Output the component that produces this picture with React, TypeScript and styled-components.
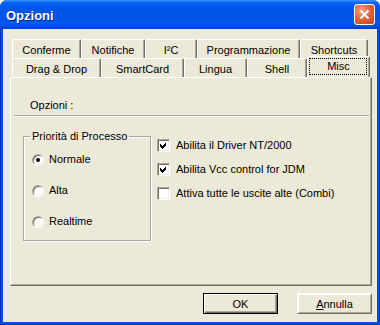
import React from 'react';
import styled, { createGlobalStyle } from 'styled-components';

const GlobalStyle = createGlobalStyle`
  html, body {
    margin: 0;
    padding: 0;
    background: #fff;
  }
  body {
    font-family: "Liberation Sans", Arial, sans-serif;
    font-size: 11px;
    color: #000;
  }
`;

const Window = styled.div`
  width: 380px;
  height: 325px;
  display: flex;
  flex-direction: column;
  border-radius: 7px 7px 0 0;
  overflow: hidden;
  background: #0054e3;
`;

const TitleBar = styled.div`
  height: 29px;
  flex: none;
  display: flex;
  align-items: center;
  justify-content: space-between;
  padding: 0 5px 0 6px;
  box-sizing: border-box;
  background: linear-gradient(
    180deg,
    #3d95ff 0%,
    #0a66f5 9%,
    #0058ee 22%,
    #0054e8 55%,
    #0058ec 82%,
    #0049d8 93%,
    #003dd0 100%
  );
`;

const Title = styled.span`
  color: #fff;
  font-weight: bold;
  font-size: 13px;
  text-shadow: 1px 1px #0a1e86;
  padding-top: 1px;
`;

const CloseButton = styled.div`
  width: 21px;
  height: 21px;
  box-sizing: border-box;
  border: 1px solid #fff;
  border-radius: 3px;
  background: radial-gradient(circle at 35% 30%, #f2a78e 0%, #e4663f 45%, #c8401c 100%);
  display: flex;
  align-items: center;
  justify-content: center;
`;

const Frame = styled.div`
  flex: 1;
  display: flex;
  padding: 0 3px 3px;
  background: #0054e3;
  box-shadow: inset 1px 0 #0030c0, inset -1px 0 #0030c0, inset 0 -1px #0030c0;
`;

const Client = styled.div`
  flex: 1;
  display: flex;
  flex-direction: column;
  background: #ece9d8;
  padding: 10px 5px 0 7px;
`;

const TabRow = styled.div<{ $front?: boolean }>`
  display: flex;
  height: 19px;
  padding-left: 2px;
  position: relative;
  z-index: ${(p) => (p.$front ? 2 : 1)};
`;

const Tab = styled.div<{ $w: number; $selected?: boolean }>`
  width: ${(p) => p.$w}px;
  height: ${(p) => (p.$selected ? 21 : 19)}px;
  margin-top: ${(p) => (p.$selected ? -2 : 0)}px;
  box-sizing: border-box;
  flex: none;
  display: flex;
  align-items: center;
  justify-content: center;
  padding-top: ${(p) => (p.$selected ? 0 : 1)}px;
  padding-bottom: ${(p) => (p.$selected ? 3 : 0)}px;
  background: #ece9d8;
  border-left: 1px solid #fff;
  border-top: 1px solid #fff;
  border-right: 1px solid #716f64;
  border-radius: 2px 2px 0 0;
  box-shadow: inset -1px 0 #aca899;
  white-space: nowrap;
`;

const FocusRect = styled.div`
  position: absolute;
  left: 1px;
  right: 2px;
  top: 1px;
  bottom: 2px;
  border: 1px dotted #000;
`;

const SelectedTab = styled(Tab)`
  position: relative;
`;

const Panel = styled.div`
  height: 209px;
  flex: none;
  box-sizing: border-box;
  display: flex;
  flex-direction: column;
  border-left: 1px solid #fff;
  border-top: 1px solid #fff;
  border-right: 1px solid #716f64;
  border-bottom: 1px solid #716f64;
  box-shadow: inset -1px -1px #aca899;
`;

const Caption = styled.div`
  margin: 21px 0 0 19px;
  line-height: 13px;
`;

const Separator = styled.div`
  margin: 3px 2px 0 3px;
  border-top: 1px solid #aca899;
  border-bottom: 1px solid #fff;
`;

const Body = styled.div`
  display: flex;
  align-items: flex-start;
`;

const GroupBox = styled.fieldset`
  margin: 13px 0 0 12px;
  padding: 0 0 0 6px;
  width: 128px;
  height: 111px;
  box-sizing: border-box;
  border: 1px solid #aca899;
  box-shadow: 1px 1px #fff, inset 1px 1px #fff;
`;

const Legend = styled.legend`
  padding: 0 2px;
  line-height: 13px;
  font-size: 11px;
`;

const OptionList = styled.div<{ $gap: number }>`
  display: flex;
  flex-direction: column;
  gap: ${(p) => p.$gap}px;
`;

const RadioList = styled(OptionList)`
  margin: 10px 0 0 2px;
`;

const CheckList = styled(OptionList)`
  margin: 22px 0 0 6px;
`;

const OptionRow = styled.label<{ $gap: number }>`
  display: flex;
  align-items: center;
  gap: ${(p) => p.$gap}px;
  height: 13px;
  line-height: 13px;
  white-space: nowrap;
`;

const RadioCircle = styled.span`
  width: 12px;
  height: 12px;
  box-sizing: border-box;
  border-radius: 50%;
  background: #fff;
  border: 1px solid;
  border-color: #aca899 #fff #fff #aca899;
  box-shadow: inset 1px 1px #716f64, inset -1px -1px #f1efe2;
  display: flex;
  align-items: center;
  justify-content: center;
`;

const RadioDot = styled.span`
  width: 4px;
  height: 4px;
  border-radius: 50%;
  background: #000;
`;

const CheckBox = styled.span`
  width: 13px;
  height: 13px;
  box-sizing: border-box;
  background: #fff;
  border: 1px solid;
  border-color: #aca899 #fff #fff #aca899;
  box-shadow: inset 1px 1px #716f64, inset -1px -1px #f1efe2;
  display: flex;
  align-items: center;
  justify-content: center;
`;

const ButtonRow = styled.div`
  display: flex;
  justify-content: flex-end;
  gap: 19px;
  margin-top: 7px;
`;

const Button = styled.div<{ $default?: boolean }>`
  width: 75px;
  height: 21px;
  box-sizing: border-box;
  display: flex;
  align-items: center;
  justify-content: center;
  background: #ece9d8;
  border: 1px solid ${(p) => (p.$default ? '#000' : 'transparent')};
  box-shadow: ${(p) =>
    p.$default
      ? 'inset 1px 1px #fff, inset -1px -1px #716f64, inset -2px -2px #aca899'
      : 'inset 1px 1px #fff, inset -1px -1px #aca899'};
  ${(p) =>
    p.$default
      ? ''
      : 'border-color: #fff #716f64 #716f64 #fff;'}
`;

const Radio = ({ label, checked }: { label: string; checked?: boolean }) => (
  <OptionRow $gap={5}>
    <RadioCircle>{checked && <RadioDot />}</RadioCircle>
    {label}
  </OptionRow>
);

const Check = ({ label, checked }: { label: string; checked?: boolean }) => (
  <OptionRow $gap={6}>
    <CheckBox>
      {checked && (
        <svg width="9" height="9" viewBox="0 0 9 9" shapeRendering="crispEdges">
          <polygon points="1,3 3,5 7,1 7,4 3,8 1,6" fill="#000" />
        </svg>
      )}
    </CheckBox>
    {label}
  </OptionRow>
);

export default function App() {
  return (
    <>
      <GlobalStyle />
      <Window>
        <TitleBar>
          <Title>Opzioni</Title>
          <CloseButton>
            <svg width="11" height="11" viewBox="0 0 11 11">
              <path d="M1.5 1.5 L9.5 9.5 M9.5 1.5 L1.5 9.5" stroke="#fff" strokeWidth="2" />
            </svg>
          </CloseButton>
        </TitleBar>
        <Frame>
          <Client>
            <TabRow>
              <Tab $w={69}>Conferme</Tab>
              <Tab $w={64}>Notifiche</Tab>
              <Tab $w={52}>I²C</Tab>
              <Tab $w={103}>Programmazione</Tab>
              <Tab $w={68}>Shortcuts</Tab>
            </TabRow>
            <TabRow $front>
              <Tab $w={89}>Drag &amp; Drop</Tab>
              <Tab $w={83}>SmartCard</Tab>
              <Tab $w={63}>Lingua</Tab>
              <Tab $w={60}>Shell</Tab>
              <SelectedTab $w={63} $selected>
                Misc
                <FocusRect />
              </SelectedTab>
            </TabRow>
            <Panel>
              <Caption>Opzioni :</Caption>
              <Separator />
              <Body>
                <GroupBox>
                  <Legend>Priorità di Processo</Legend>
                  <RadioList $gap={18}>
                    <Radio label="Normale" checked />
                    <Radio label="Alta" />
                    <Radio label="Realtime" />
                  </RadioList>
                </GroupBox>
                <CheckList $gap={11}>
                  <Check label="Abilita il Driver NT/2000" checked />
                  <Check label="Abilita Vcc control for JDM" checked />
                  <Check label="Attiva tutte le uscite alte (Combi)" />
                </CheckList>
              </Body>
            </Panel>
            <ButtonRow>
              <Button $default>OK</Button>
              <Button>
                <span>
                  <u>A</u>nnulla
                </span>
              </Button>
            </ButtonRow>
          </Client>
        </Frame>
      </Window>
    </>
  );
}
